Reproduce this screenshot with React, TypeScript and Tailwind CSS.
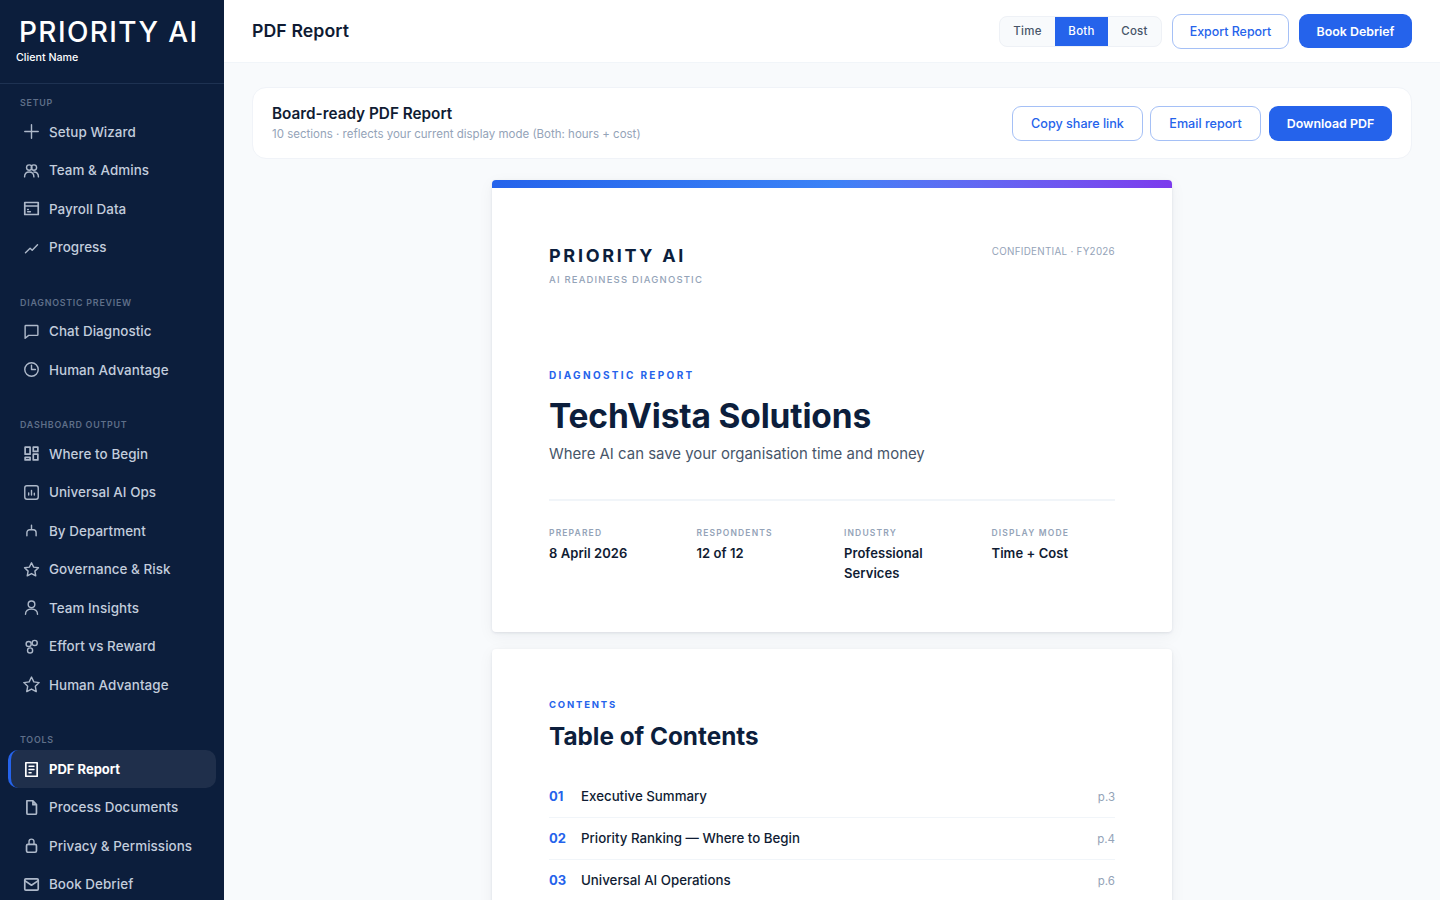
import type { ReactNode } from "react";

const icons: Record<string, ReactNode> = {
  plus: <path d="M12 2.5v19M2.5 12h19" />,
  team: (
    <>
      <circle cx="8.8" cy="7.8" r="3.8" />
      <circle cx="15.4" cy="7.8" r="3.8" />
      <path d="M2.2 21c0-4.2 2.8-7 6.6-7s6.6 2.8 6.6 7M15.4 14c3.7 0 6.4 2.8 6.4 7" />
    </>
  ),
  payroll: (
    <>
      <rect x="2.5" y="3.5" width="19" height="17" strokeWidth="2.4" />
      <path d="M2.5 8.5h19M6.5 16.5h4M6.5 13.5h1" />
    </>
  ),
  progress: <path d="M3.5 19.5l6.5-6.5 3 3 7.5-8" />,
  chat: <path d="M3 4.5a1 1 0 0 1 1-1h16a1 1 0 0 1 1 1v12a1 1 0 0 1-1 1H8l-5 4z" />,
  clock: (
    <>
      <circle cx="12" cy="12" r="9.5" />
      <path d="M12 6v6h5.5" />
    </>
  ),
  grid: (
    <>
      <rect x="3" y="3" width="7" height="10" strokeWidth="2.4" />
      <rect x="14.5" y="3" width="6.5" height="6" strokeWidth="2.4" />
      <rect x="3" y="17.5" width="7" height="3.5" strokeWidth="2.4" />
      <rect x="14.5" y="13" width="6.5" height="8" strokeWidth="2.4" />
    </>
  ),
  ops: (
    <>
      <rect x="2.5" y="2.5" width="19" height="19" rx="3" />
      <path d="M8 12.5v3M12 9v6.5M16 13v2.5" />
    </>
  ),
  plug: <path d="M12 4.5v6.5M5.5 19.5v-4.5a4 4 0 0 1 4-4h5a4 4 0 0 1 4 4v4.5" />,
  star: <polygon points="12 2.5 15 8.7 21.8 9.6 16.8 14.3 18 21 12 17.7 6 21 7.2 14.3 2.2 9.6 9 8.7" />,
  bigStar: <polygon points="12 1.5 15.3 8.3 22.8 9.3 17.4 14.5 18.7 22 12 18.4 5.3 22 6.6 14.5 1.2 9.3 8.7 8.3" />,
  user: (
    <>
      <circle cx="12" cy="7.5" r="4.7" />
      <path d="M3.5 21.5c0-4.6 3.6-7.5 8.5-7.5s8.5 2.9 8.5 7.5" />
    </>
  ),
  effort: (
    <>
      <circle cx="8" cy="8.5" r="3.6" />
      <circle cx="16.5" cy="7" r="3.6" />
      <circle cx="10" cy="17.5" r="3.6" />
    </>
  ),
  pdf: (
    <>
      <rect x="4" y="2.5" width="16" height="19" strokeWidth="2.4" />
      <path d="M8.5 7.5h7M8.5 12h7M8.5 16.5h3" />
    </>
  ),
  doc: <path d="M5.5 2.5h8.5l5 5.5v12a1.5 1.5 0 0 1-1.5 1.5H7A1.5 1.5 0 0 1 5.5 20zM14 2.5V8h5" strokeWidth="2.4" />,
  lock: (
    <>
      <rect x="5" y="10.5" width="14" height="11" rx="2" strokeWidth="2.4" />
      <path d="M8.5 10.5V6.5a3.5 3.5 0 0 1 7 0v4" />
    </>
  ),
  mail: (
    <>
      <rect x="2.5" y="4" width="19" height="16" rx="1.5" strokeWidth="2.4" />
      <path d="M2.5 6.5l9.5 6.5 9.5-6.5" strokeWidth="2.4" />
    </>
  ),
};

const sections = [
  {
    label: "SETUP",
    items: [
      { name: "Setup Wizard", icon: "plus" },
      { name: "Team & Admins", icon: "team" },
      { name: "Payroll Data", icon: "payroll" },
      { name: "Progress", icon: "progress" },
    ],
  },
  {
    label: "DIAGNOSTIC PREVIEW",
    items: [
      { name: "Chat Diagnostic", icon: "chat" },
      { name: "Human Advantage", icon: "clock" },
    ],
  },
  {
    label: "DASHBOARD OUTPUT",
    items: [
      { name: "Where to Begin", icon: "grid" },
      { name: "Universal AI Ops", icon: "ops" },
      { name: "By Department", icon: "plug" },
      { name: "Governance & Risk", icon: "star" },
      { name: "Team Insights", icon: "user" },
      { name: "Effort vs Reward", icon: "effort" },
      { name: "Human Advantage", icon: "bigStar" },
    ],
  },
  {
    label: "TOOLS",
    items: [
      { name: "PDF Report", icon: "pdf", active: true },
      { name: "Process Documents", icon: "doc" },
      { name: "Privacy & Permissions", icon: "lock" },
      { name: "Book Debrief", icon: "mail" },
    ],
  },
];

const meta = [
  { label: "PREPARED", value: "8 April 2026" },
  { label: "RESPONDENTS", value: "12 of 12" },
  { label: "INDUSTRY", value: "Professional Services" },
  { label: "DISPLAY MODE", value: "Time + Cost" },
];

const toc = [
  { num: "01", name: "Executive Summary", page: "p.3" },
  { num: "02", name: "Priority Ranking — Where to Begin", page: "p.4" },
  { num: "03", name: "Universal AI Operations", page: "p.6" },
];

function NavIcon({ name, active }: { name: string; active?: boolean }) {
  return (
    <svg
      viewBox="0 0 24 24"
      fill="none"
      stroke="currentColor"
      strokeWidth="2"
      strokeLinecap="round"
      strokeLinejoin="round"
      className={active ? "h-[17px] w-[17px] shrink-0 text-white" : "h-[17px] w-[17px] shrink-0 text-[#aeb9ca]"}
    >
      {icons[name]}
    </svg>
  );
}

function Sidebar() {
  return (
    <aside className="flex h-screen w-[224px] shrink-0 flex-col overflow-hidden bg-[#0c1e3c]">
      <div className="h-[84px] shrink-0 border-b border-[#1e3252] pl-[16px] pt-[14px]">
        <div className="pl-[3px] text-[28px] leading-[36px] font-medium tracking-[0.05em] text-white">PRIORITY AI</div>
        <div className="text-[10.7px] leading-[15px] font-medium text-white">Client Name</div>
      </div>
      <nav className="flex flex-col gap-[27.5px] px-[8px] pt-[11px]">
        {sections.map((section) => (
          <div key={section.label}>
            <div className="mb-[3px] h-[15px] pl-[12px] text-[8.9px] leading-[15px] font-semibold tracking-[0.085em] text-[#5f6f89]">
              {section.label}
            </div>
            {section.items.map((item) => (
              <a
                key={item.name + item.icon}
                className={
                  item.active
                    ? "mb-[1px] flex h-[37.5px] items-center gap-[9px] rounded-[10px] border-l-[3px] border-[#2563eb] bg-[#1f2f4b] pl-[12px] pt-[1px] text-[13px] font-bold text-white"
                    : "mb-[1px] flex h-[37.5px] items-center gap-[9px] rounded-[10px] border-l-[3px] border-transparent pl-[12px] text-[13.4px] font-medium tracking-[0.005em] text-[#c3cddc]"
                }
              >
                <NavIcon name={item.icon} active={item.active} />
                {item.name}
              </a>
            ))}
          </div>
        ))}
      </nav>
    </aside>
  );
}

function TopBar() {
  return (
    <header className="flex h-[63px] shrink-0 items-center justify-between border-b border-[#f1f5f9] bg-white pl-[28px] pr-[28px]">
      <h1 className="pt-[1px] text-[17.7px] font-semibold tracking-[0.005em] text-[#0f1b33]">PDF Report</h1>
      <div className="flex items-center gap-[10px]">
        <div className="flex h-[31px] overflow-hidden rounded-[8px] border border-[#eef1f6] bg-[#f8fafc] text-[11.5px] font-medium">
          <button className="w-[55px] pt-[1px] tracking-[0.02em] text-[#475569]">Time</button>
          <button className="w-[53px] bg-[#2563eb] pt-[1px] tracking-[0.02em] text-white">Both</button>
          <button className="w-[53px] pt-[1px] tracking-[0.02em] text-[#475569]">Cost</button>
        </div>
        <button className="h-[35px] w-[117px] rounded-[9px] border border-[#a5c0f6] bg-white pt-[2px] text-[12.4px] font-medium text-[#2563eb]">
          Export Report
        </button>
        <button className="h-[34px] w-[113px] rounded-[9px] bg-[#2563eb] pt-[2px] text-[12.4px] font-semibold text-white">
          Book Debrief
        </button>
      </div>
    </header>
  );
}

function ActionCard() {
  return (
    <section className="flex h-[72px] items-center justify-between rounded-[14px] border border-[#f0f3f8] bg-white pl-[19px] pr-[19px]">
      <div>
        <h2 className="text-[15.3px] leading-[22px] font-semibold text-[#101c33]">Board-ready PDF Report</h2>
        <p className="mt-[1px] text-[11.5px] leading-[17px] text-[#94a3b8]">
          10 sections · reflects your current display mode (Both: hours + cost)
        </p>
      </div>
      <div className="flex items-center gap-[7px]">
        <button className="h-[35px] w-[131px] rounded-[9px] border border-[#a5c0f6] bg-white pt-[2px] text-[12.6px] font-medium text-[#2563eb]">
          Copy share link
        </button>
        <button className="h-[35px] w-[111px] rounded-[9px] border border-[#a5c0f6] bg-white pt-[2px] text-[12.6px] font-medium text-[#2563eb]">
          Email report
        </button>
        <button className="ml-[1px] h-[35px] w-[123px] rounded-[9px] bg-[#2563eb] pt-[2px] text-[12.4px] font-semibold text-white">
          Download PDF
        </button>
      </div>
    </section>
  );
}

function CoverPage() {
  return (
    <article className="h-[452px] overflow-hidden rounded-[4px] bg-white shadow-[0_1px_3px_rgba(15,30,60,0.1),0_4px_16px_rgba(15,30,60,0.05)]">
      <div className="h-[8px] bg-gradient-to-r from-[#2563eb] via-[#3b82f6] to-[#7c3aed]" />
      <div className="px-[57px] pt-[56px]">
        <div className="flex items-start justify-between">
          <div>
            <div className="text-[18px] leading-[24px] font-bold tracking-[0.15em] text-[#0c1e3c]">PRIORITY AI</div>
            <div className="mt-[5px] text-[9.5px] leading-[14px] font-medium tracking-[0.124em] text-[#94a3b8]">
              AI READINESS DIAGNOSTIC
            </div>
          </div>
          <div className="mt-[1px] text-[9.8px] leading-[14px] tracking-[0.03em] text-[#94a3b8]">
            CONFIDENTIAL · FY2026
          </div>
        </div>
        <div className="mt-[80px] text-[10px] leading-[16px] font-bold tracking-[0.234em] text-[#2563eb]">
          DIAGNOSTIC REPORT
        </div>
        <h2 className="mt-[11px] text-[33.5px] leading-[44px] font-bold tracking-[-0.005em] text-[#0c1e3c]">
          TechVista Solutions
        </h2>
        <p className="mt-[3.5px] text-[14.95px] leading-[24px] text-[#475569]">
          Where AI can save your organisation time and money
        </p>
        <div className="mt-[33px] h-[2px] bg-[#f1f5f9]" />
        <div className="mt-[25px] grid grid-cols-4 gap-[24px]">
          {meta.map((m) => (
            <div key={m.label}>
              <div className="text-[8.5px] leading-[14px] font-semibold tracking-[0.135em] text-[#94a3b8]">{m.label}</div>
              <div className="mt-[3.5px] text-[13px] leading-[20px] font-semibold tracking-[0.005em] text-[#101c33]">{m.value}</div>
            </div>
          ))}
        </div>
      </div>
    </article>
  );
}

function ContentsPage() {
  return (
    <article className="h-[400px] rounded-[4px] bg-white px-[57px] pt-[48px] shadow-[0_1px_3px_rgba(15,30,60,0.1),0_4px_16px_rgba(15,30,60,0.05)]">
      <div className="text-[9.5px] leading-[16px] font-bold tracking-[0.19em] text-[#2563eb]">CONTENTS</div>
      <h2 className="mt-[6px] text-[24.3px] leading-[34px] font-bold text-[#0c1e3c]">Table of Contents</h2>
      <div className="mt-[23px]">
        {toc.map((row) => (
          <div key={row.num} className="flex h-[42px] items-center border-b border-[#f1f5f9] last:border-b-0">
            <span className="w-[32px] text-[13px] font-bold text-[#2563eb]">{row.num}</span>
            <span className="flex-1 text-[13.3px] font-medium text-[#101c33]">{row.name}</span>
            <span className="pt-[2px] text-[11.5px] text-[#94a3b8]">{row.page}</span>
          </div>
        ))}
      </div>
    </article>
  );
}

export default function App() {
  return (
    <div className="flex h-screen overflow-hidden bg-[#f8fafc] font-['Inter',sans-serif]">
      <Sidebar />
      <main className="flex min-w-0 flex-1 flex-col">
        <TopBar />
        <div className="flex flex-col px-[28px] pt-[24px]">
          <ActionCard />
          <div className="mx-auto mt-[21px] flex w-[680px] flex-col gap-[17px]">
            <CoverPage />
            <ContentsPage />
          </div>
        </div>
      </main>
    </div>
  );
}
